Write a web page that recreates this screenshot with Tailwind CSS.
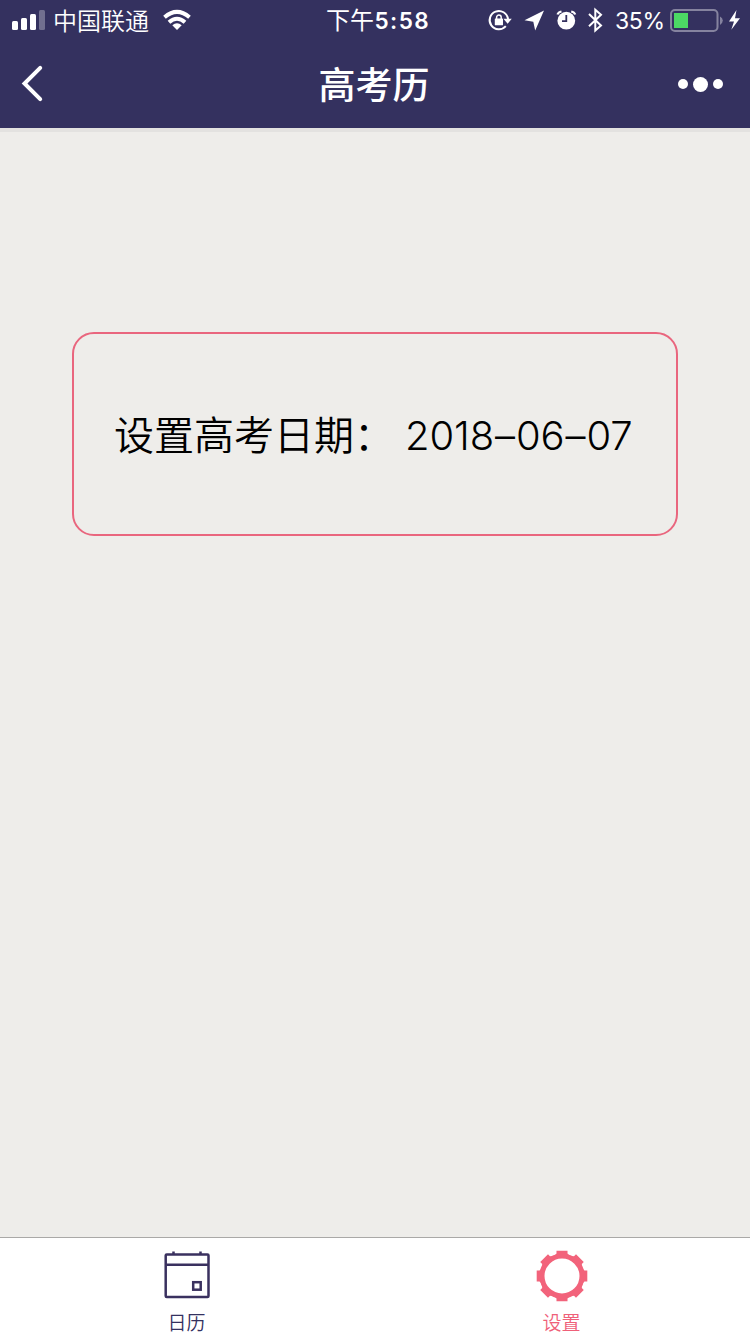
<!DOCTYPE html>
<html lang="zh-CN">
<head>
  <meta charset="UTF-8">
  <meta name="viewport" content="width=device-width, initial-scale=1.0">
  <title>高考历</title>
  <script src="https://cdn.jsdelivr.net/npm/@tailwindcss/browser@4"></script>
</head>
<body class="bg-[#eeedea] h-[1334px] w-[750px] flex flex-col overflow-hidden font-['Inter','Noto_Sans_CJK_SC',sans-serif]">
  <header class="h-32 bg-[#34315f] text-white">
    <!-- status bar -->
    <div class="h-10 grid grid-cols-[326px_104px_1fr] items-center">
      <div class="flex items-center pl-3">
        <svg class="w-[33px] h-10" viewBox="12 0 33 40" fill="#fff">
          <rect x="12" y="21" width="6" height="9" rx="1.5"/>
          <rect x="21" y="18" width="6" height="12" rx="1.5"/>
          <rect x="30" y="14" width="6" height="16" rx="1.5"/>
          <rect x="39" y="10" width="6" height="20" rx="1.5" opacity=".3"/>
        </svg>
        <span class="ml-2 w-24 text-[24px] leading-10 whitespace-nowrap font-['Noto_Sans_CJK_SC',sans-serif] font-[350]">中国联通</span>
        <svg class="ml-[14px] w-7 h-10" viewBox="163 0 28 40" fill="none" stroke="#fff" stroke-width="4">
          <path d="M164.500 17.300Q177 6.500 189.500 17.300M169 22.300Q177 15.200 185 22.300"/>
          <path d="M172.300 25.300Q177 21.200 181.700 25.300L177 30Z" fill="#fff" stroke="none"/>
        </svg>
      </div>
      <div class="flex items-center pt-[2px] text-[24px] leading-9 whitespace-nowrap"><span class="w-[49px] font-normal">下午</span><span class="text-[22.5px] tracking-[1.4px] font-semibold">5:58</span></div>
      <div class="flex items-center">
        <svg class="w-[180px] h-10" viewBox="430 0 180 40" fill="none" stroke="#fff">
          <!-- rotation lock -->
          <path d="M505.800 26.200A9.200 9.200 0 1 1 508 19" stroke-width="2"/>
          <path d="M503.500 18.800H511.800L507.600 23.800Z" fill="#fff" stroke="none"/>
          <rect x="494.800" y="18.500" width="8.200" height="6.800" rx=".6" fill="#fff" stroke="none"/>
          <path d="M496.600 19V17.300a2.300 2.300 0 0 1 4.600 0V19" stroke-width="1.500"/>
          <!-- location -->
          <path d="M544 10.500L524.500 20.300L533.300 21.700L535.200 30.500Z" fill="#fff" stroke="none"/>
          <!-- alarm -->
          <circle cx="566.300" cy="20.700" r="8.900" fill="#fff" stroke="none"/>
          <path d="M566.300 15V21.200H562" stroke="#34315f" stroke-width="1.800"/>
          <path d="M557.500 14.500Q558.300 12.200 561.500 11.500M571.200 11.500Q574.400 12.200 575.200 14.500" stroke-width="2.200"/>
          <!-- bluetooth -->
          <path d="M589 14L601 25.500L595.300 30.500V9.800L601 14.800L589 26.300" stroke-width="2"/>
        </svg>
        <span class="ml-[5px] w-[50px] pt-[2px] text-[23px] tracking-[-0.4px] leading-9 font-normal whitespace-nowrap">35%</span>
        <svg class="ml-[5px] w-[72px] h-10" viewBox="670 0 72 40">
          <rect x="671" y="10" width="46.500" height="21" rx="4" fill="none" stroke="#85839f" stroke-width="2"/>
          <rect x="674" y="13" width="14" height="15" fill="#4cd964"/>
          <path d="M720 16.500Q722.800 18 722.800 20.500T720 25Z" fill="#85839f"/>
          <path d="M736.500 10L729 21.500H734L731.300 29.800L740 18.200H735Z" fill="#fff"/>
        </svg>
      </div>
    </div>
    <!-- nav bar -->
    <div class="h-[88px] grid grid-cols-[100px_1fr_100px] items-center">
      <svg class="ml-5 w-6 h-[88px]" viewBox="20 40 24 88" fill="none" stroke="#fff" stroke-width="4" stroke-linecap="round">
        <path d="M40.200 67.800L24.500 83.500L40.200 99.200" stroke-linejoin="miter"/>
      </svg>
      <h1 class="text-center text-[37px] leading-[86px] h-[88px] font-medium font-['Noto_Sans_CJK_SC',sans-serif] -ml-[2px]">高考历</h1>
      <div class="flex items-center gap-[5px] pl-[28px]">
        <i class="size-[10px] rounded-full bg-white"></i>
        <i class="size-[15px] rounded-full bg-white"></i>
        <i class="size-[10px] rounded-full bg-white"></i>
      </div>
    </div>
  </header>

  <main class="flex-1 border-t-4 border-[#e3e2e0] pt-[200px]">
    <div class="mx-[72px] h-[204px] border-2 border-[#e9667e] rounded-[22px] flex items-center text-black text-[40px] whitespace-nowrap pl-10">
      <span class="w-[291px] pb-[2px] font-['Noto_Sans_CJK_SC',sans-serif] font-[350]">设置高考日期：</span>
      <span class="pt-[3px] font-[350] tracking-[-0.1px]">2018<span class="mx-[1px]">–</span>06<span class="mx-[1px]">–</span>07</span>
    </div>
  </main>

  <!-- tab bar -->
  <nav class="h-[97px] bg-white border-t border-[#aaa9a7] grid grid-cols-2 font-['Noto_Sans_CJK_SC',sans-serif] text-[19px] font-[350] leading-7">
    <a class="flex flex-col items-center text-[#34315f] pt-3 pr-[2px]">
      <svg class="w-[46px] h-[50px]" viewBox="164 1250 46 50" fill="none" stroke="#3a315f" stroke-width="2.500">
        <rect x="165.700" y="1254.500" width="42.800" height="42.500" rx="1"/>
        <path d="M166 1264.800H208M173.500 1251.500V1255M200.500 1251.500V1255"/>
        <rect x="193.200" y="1282.200" width="7.500" height="7.500"/>
      </svg>
      <span class="mt-2">日历</span>
    </a>
    <a class="flex flex-col items-center text-[#ef6079] pt-3 pr-[2px]">
      <svg class="w-[52px] h-[52px]" viewBox="-26 -26 52 52" fill="#f2637b">
        <circle r="20" fill="none" stroke="#f2637b" stroke-width="5"/>
        <g id="teeth">
          <path id="tooth" d="M-5.500 -25.300H5.500V-22.500L9 -19H-9L-5.500 -22.500Z"/>
          <use href="#tooth" transform="rotate(45)"/>
          <use href="#tooth" transform="rotate(90)"/>
          <use href="#tooth" transform="rotate(135)"/>
        </g>
        <use href="#teeth" transform="rotate(180)"/>
      </svg>
      <span class="mt-[6px]">设置</span>
    </a>
  </nav>
</body>
</html>
